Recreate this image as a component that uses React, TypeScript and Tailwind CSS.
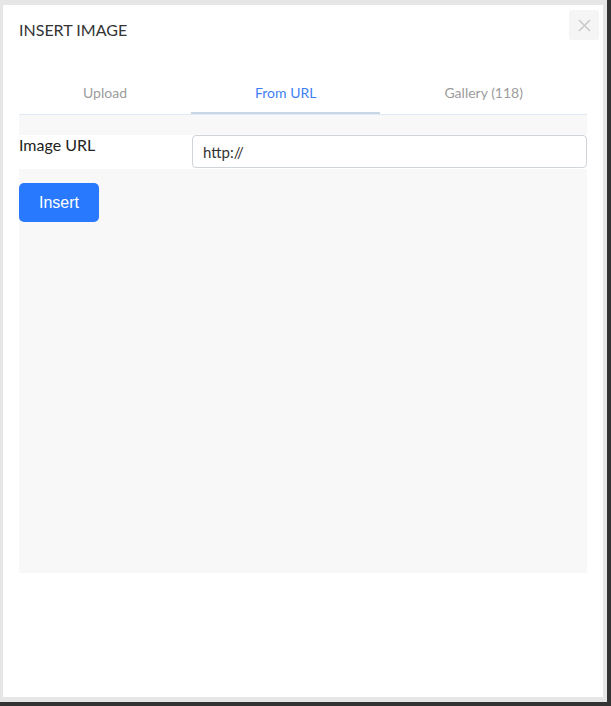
import { useState } from "react";

const tabs = ["Upload", "From URL", "Gallery (118)"];

const CloseButton = () => {
  return (
    <button className="absolute top-[5px] right-[4px] w-[30px] h-[30px] rounded-[3px] bg-[#f5f5f5] flex items-center justify-center">
      <svg width="13" height="13" viewBox="0 0 13 13">
        <path d="M1 1 L12 12 M12 1 L1 12" stroke="#c9c9c9" strokeWidth="1.6" />
      </svg>
    </button>
  );
};

const App = () => {
  const [active, setActive] = useState(1);
  const [url, setUrl] = useState("http://");

  return (
    <div className="w-[611px] h-[706px] bg-[#333333] pr-[4px] pb-[4px] font-['Lato',sans-serif]">
      <div className="w-full h-full bg-[#e6e6e6] pl-[3px] pt-[5px] pr-[4px] pb-[5px]">
        <div className="relative w-full h-full bg-white px-[16px] pt-[15px]">
          <h1 className="text-[16px] leading-[19px] text-[#333]">INSERT IMAGE</h1>
          <CloseButton />

          <div className="mt-[35px] flex border-b border-[#dfeaf6]">
            {tabs.map((t, i) => (
              <button
                key={t}
                onClick={() => setActive(i)}
                className={
                  i === active
                    ? "flex-auto pt-[10px] pb-[11px] text-[14px] leading-[17px] text-[#3f7ff5] border-b-2 border-[#c9d6e3]"
                    : "flex-auto pt-[10px] pb-[11px] text-[14px] leading-[17px] text-[#9c9c9c] border-b-2 border-transparent"
                }
              >
                {t}
              </button>
            ))}
          </div>

          <div className="h-[458px] bg-[#f8f8f8] pt-[20px]">
            <div className="flex h-[34px] bg-white">
              <label className="w-[173px] text-[16px] leading-[19px] text-[#222]">Image URL</label>
              <input
                value={url}
                onChange={(e) => setUrl(e.target.value)}
                className="flex-1 h-[33px] border border-[#cfd4da] rounded-[4px] pl-[10px] text-[15px] text-[#333] outline-none bg-white"
              />
            </div>
            <button className="mt-[14px] w-[80px] h-[39px] rounded-[5px] bg-[#2979ff] text-white text-[16px] font-['Liberation_Sans',Arial,sans-serif]">
              Insert
            </button>
          </div>
        </div>
      </div>
    </div>
  );
};

export default App;
